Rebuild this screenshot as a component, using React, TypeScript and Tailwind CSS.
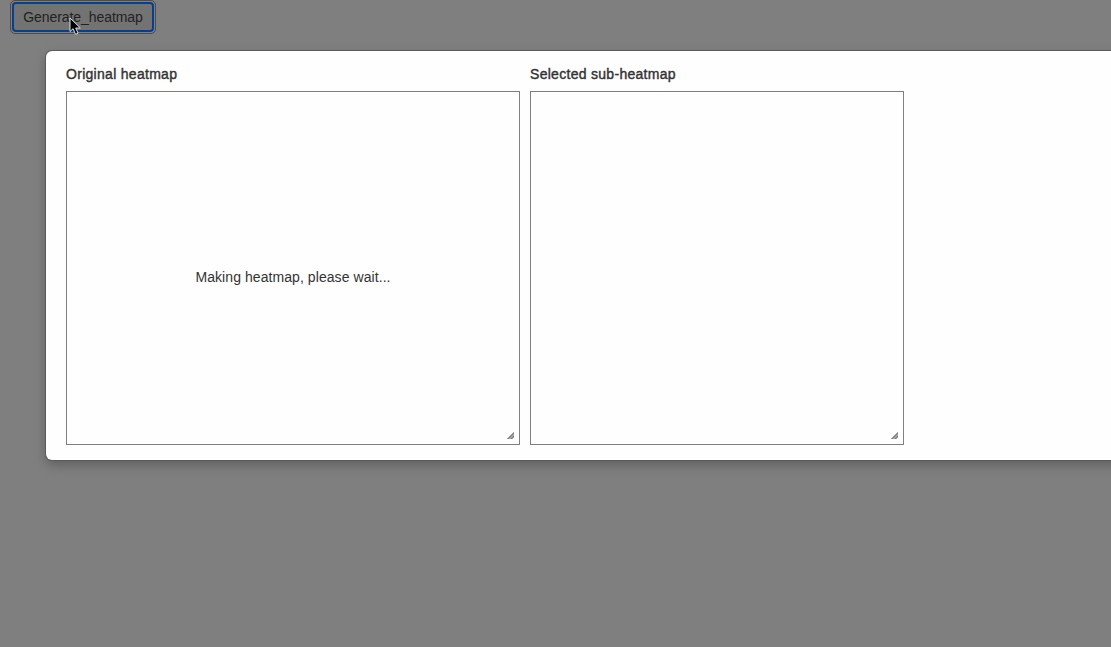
function ResizeHandle() {
  return (
    <svg className="absolute right-[5px] bottom-[5px] h-[7px] w-[7px]" viewBox="0 0 7 7" shapeRendering="crispEdges">
      <path d="M0 7V6H1V5H2V4H3V3H4V2H5V1H6V0H7V6H6V7Z" fill="#a4a4a4" />
      <path d="M1 6h1v-1h1v-1h1v-1h1v-1h1v-1h1v1h-1v1h-1v1h-1v1h-1v1h-1v1h-1zM4 6h1v-1h1v-1h1v1h-1v1h-1v1h-1z" fill="#808080" />
    </svg>
  );
}

function Panel({ title, size, message }: { title: string; size: string; message?: string }) {
  return (
    <section>
      <h5 className="mb-[7px] h-5 w-max text-[14px] leading-5 font-normal tracking-[0.29px] [-webkit-text-stroke:0.4px_#333]">
        {title}
      </h5>
      <div className={`relative flex items-center justify-center border border-[#808080] ${size}`}>
        {message && <p className="mt-[18px] text-[14px] leading-5 tracking-[0.07px]">{message}</p>}
        <ResizeHandle />
      </div>
    </section>
  );
}

export default function App() {
  return (
    <div className="h-[647px] w-[1111px] overflow-hidden bg-[#7f7f7f] font-['Liberation_Sans',Arial,sans-serif] text-[#333]">
      <header className="h-[51px] pl-[10px]">
        <button className="relative flex h-[34px] w-[146px] items-center justify-center rounded-[5px] border border-[#4c4c4c] bg-[#7f7f7f] p-px">
          <span className="flex h-[30px] w-full items-center justify-center rounded-[4px] border-2 border-[#06408c] bg-[#737373] text-[14px] text-[#222]">
            <span className="tracking-[-0.07px]">Generate_heatmap</span>
          </span>
          <svg className="absolute top-[16px] left-[58px] h-[19px] w-[13px]" viewBox="0 0 13 19">
            <path d="M1 1v13.5l3.1-2.8 2.4 5.6 2.6-1.1-2.4-5.2h4.6Z" fill="#000" stroke="#ddd" strokeWidth="1" />
          </svg>
        </button>
      </header>
      <main className="ml-[46px] flex h-[409px] w-[1100px] gap-[10px] rounded-[6px] bg-[#fefefe] pt-[13px] pl-5 shadow-[0_0_0_1px_#5a5a5a,0_5px_12px_rgba(0,0,0,0.25)]">
        <Panel title="Original heatmap" size="h-[354px] w-[454px]" message="Making heatmap, please wait..." />
        <Panel title="Selected sub-heatmap" size="h-[354px] w-[374px]" />
      </main>
    </div>
  );
}
